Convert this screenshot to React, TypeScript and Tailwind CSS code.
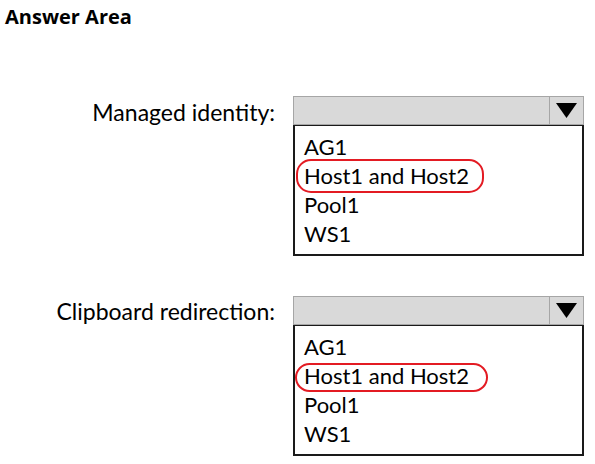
export default function App() {
  const items = ['AG1', 'Host1 and Host2', 'Pool1', 'WS1']

  const Dropdown = ({ ring }: { ring: string }) => (
    <div className="w-[291px]">
      <div className="flex h-[29px] border border-[#a6a6a6] bg-[#d9d9d9]">
        <div className="flex-1" />
        <div className="flex w-[34px] items-center justify-center border-l border-[#a6a6a6]">
          <svg width="21" height="15" viewBox="0 0 21 15">
            <polygon points="0,0 21,0 10.5,15" fill="#000" />
          </svg>
        </div>
      </div>
      <div className="relative border-2 border-t border-[#1a1a1a] bg-white pt-[6px] pb-[6px] pl-[9px]">
        {items.map((it) => (
          <div key={it} className="h-[29px] text-[22px] leading-[29px] text-black">
            {it}
          </div>
        ))}
        <div className={`absolute rounded-[15px] border-2 border-[#e31b23] ${ring}`} />
      </div>
    </div>
  )

  return (
    <div className="h-[464px] w-[595px] bg-white font-['Lato','Liberation_Sans',sans-serif]">
      <div className="pl-[5px] pt-[4px] text-[20px] font-bold leading-[26px] text-black font-['Open_Sans','Liberation_Sans',sans-serif]">
        Answer Area
      </div>

      <div className="mt-[66px] flex">
        <div className="w-[276px] pr-[1px] pt-[2px] text-right text-[23px] leading-[29px] text-black">
          Managed identity:
        </div>
        <div className="ml-[17px]">
          <Dropdown ring="left-[1px] top-[33px] h-[34px] w-[188px]" />
        </div>
      </div>

      <div className="mt-[40px] flex">
        <div className="w-[276px] pr-[1px] pt-[1px] text-right text-[23px] leading-[29px] text-black">
          Clipboard redirection:
        </div>
        <div className="ml-[17px]">
          <Dropdown ring="left-[0px] top-[37px] h-[29px] w-[193px]" />
        </div>
      </div>
    </div>
  )
}
